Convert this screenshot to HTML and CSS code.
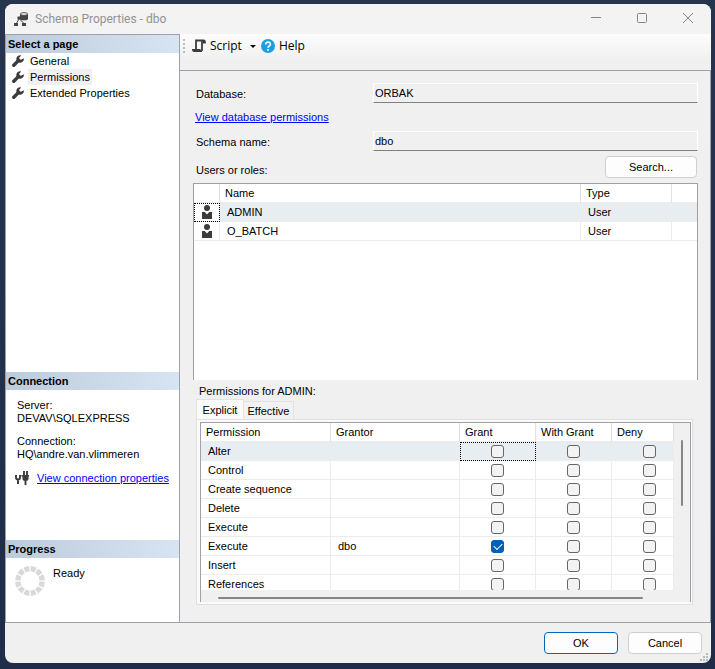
FILE: index.html
```html
<!DOCTYPE html>
<html lang="en">
<head>
<meta charset="utf-8">
<title>Schema Properties - dbo</title>
<link rel="stylesheet" href="styles.css">
</head>
<body>
<svg class="defs" aria-hidden="true">
  <symbol id="wrench" viewBox="0 0 12 12"><path d="M1.800 10.200 6.600 5.400" fill="none" stroke="#3c3c3c" stroke-width="3.400" stroke-linecap="round"/><path d="M9.200 .4A3.800 3.800 0 1 0 11.800 3.200L9 4.800 7.400 4.200 7.300 2.600Z" fill="#3c3c3c"/></symbol>
  <symbol id="user" viewBox="0 0 12 14"><circle cx="6" cy="3" r="3" fill="#3c3c3c"/><path d="M1 7h2.800L6 9.400 8.200 7H11v7H1Z" fill="#3c3c3c"/></symbol>
</svg>
<div class="window">
  <header class="titlebar">
    <svg class="app-icon" viewBox="0 0 14 15"><path d="M6 2v5c0 .8 1.500 1.300 4 1.300S14 7.800 14 7V2Z" fill="#444"/><ellipse cx="10" cy="2" rx="3.600" ry="1.400" fill="#f3f3f3" stroke="#444" stroke-width=".9"/><path d="M3.500 4.500h3v3h-3ZM0 11h4v3H0ZM8 11h4v3H8Z" fill="#444"/><path d="M5 7l-3 5M6 7.500l4 4" fill="none" stroke="#444"/></svg>
    <h1>Schema Properties - dbo</h1>
    <button class="caption" aria-label="Minimize"><svg viewBox="0 0 10 10"><path d="M0 4.500h10"/></svg></button>
    <button class="caption" aria-label="Maximize"><svg viewBox="0 0 10 10"><rect x=".5" y=".5" width="9" height="9" rx="1"/></svg></button>
    <button class="caption" aria-label="Close"><svg viewBox="0 0 10 10"><path d="M0 0l10 10M10 0 0 10"/></svg></button>
  </header>
  <div class="content">
    <aside class="sidebar">
      <nav class="pages">
        <h2>Select a page</h2>
        <a href="#general"><svg class="wrench"><use href="#wrench"/></svg><span>General</span></a>
        <a href="#permissions" class="current"><svg class="wrench"><use href="#wrench"/></svg><span>Permissions</span></a>
        <a href="#extended"><svg class="wrench"><use href="#wrench"/></svg><span>Extended Properties</span></a>
      </nav>
      <section class="connection">
        <h2>Connection</h2>
        <dl>
          <dt>Server:</dt><dd>DEVAV\SQLEXPRESS</dd>
          <dt>Connection:</dt><dd>HQ\andre.van.vlimmeren</dd>
        </dl>
        <p class="conn-link"><svg class="plug" viewBox="0 0 14 14"><path d="M1 4v2.500c0 1 .5 2 2 2s2-1 2-2V4M3 8v5M9 0v4M12 0v4M10.500 8v6" fill="none" stroke="#3c3c3c" stroke-width="1.900"/><path d="M6.500 4h8v1.500h-1V8c0 1-1 2-3 2s-3-1-3-2V5.500h-1Z" fill="#3c3c3c"/></svg><a class="link" href="#connection">View connection properties</a></p>
      </section>
      <section class="progress">
        <h2>Progress</h2>
        <p><svg class="spinner" viewBox="0 0 30 30"><circle cx="15" cy="15" r="12.200" fill="none" stroke="#d9d9d9" stroke-width="5.400" pathLength="120" stroke-dasharray="8 2" stroke-dashoffset="-1"/></svg><span>Ready</span></p>
      </section>
    </aside>
    <main>
      <div class="toolbar">
        <span class="grip"></span>
        <button class="tool"><svg class="script" viewBox="0 0 14 14"><path d="M4 11V1.500h7.500M10 12V3c0-1 .5-1.500 1.500-1.500S13 2 13 3.500h-2" fill="none" stroke="#3c3c3c" stroke-width="1.800"/><path d="M0 10h8.500c0 1 .5 2 1.500 2v1H2c-1.300 0-2-1-2-3Z" fill="#3c3c3c"/></svg>Script<i class="arrow"></i></button>
        <button class="tool"><svg class="help" viewBox="0 0 14 14"><circle cx="7" cy="7" r="7" fill="#1b9fe0"/><path d="M4.700 5.400C4.700 2.400 9.400 2.500 9.400 5.200 9.400 6.800 7 6.900 7 8.800" fill="none" stroke="#fff" stroke-width="1.700"/><path d="M6.100 10h1.800v1.800H6.100Z" fill="#fff"/></svg>Help</button>
      </div>
      <form class="page">
        <div class="field"><label for="db">Database:</label><input id="db" value="ORBAK" readonly></div>
        <p class="db-link"><a class="link" href="#database">View database permissions</a></p>
        <div class="field"><label for="schema">Schema name:</label><input id="schema" value="dbo" readonly></div>
        <div class="users-head"><span>Users or roles:</span><button type="button" class="btn search">Search...</button></div>
        <div class="users">
          <table>
            <colgroup><col class="c-icon"><col><col class="c-type"><col class="c-end"></colgroup>
            <thead><tr><th></th><th>Name</th><th>Type</th><th></th></tr></thead>
            <tbody>
              <tr class="selected"><td class="icon focus"><svg class="user"><use href="#user"/></svg></td><td>ADMIN</td><td>User</td><td></td></tr>
              <tr><td class="icon"><svg class="user"><use href="#user"/></svg></td><td>O_BATCH</td><td>User</td><td></td></tr>
            </tbody>
          </table>
        </div>
        <p class="perm-title">Permissions for ADMIN:</p>
        <div class="tabs" role="tablist"><button type="button" role="tab" class="tab active" aria-selected="true">Explicit</button><button type="button" role="tab" class="tab">Effective</button></div>
        <div class="tab-panel">
          <div class="grid">
            <div class="rows">
              <table>
                <colgroup><col class="c-perm"><col><col class="c-check"><col class="c-check"><col class="c-deny"></colgroup>
                <thead><tr><th>Permission</th><th>Grantor</th><th>Grant</th><th>With Grant</th><th>Deny</th></tr></thead>
                <tbody>
                  <tr class="selected"><td>Alter</td><td></td><td class="check focus"><input type="checkbox" aria-label="Grant Alter"></td><td class="check"><input type="checkbox" aria-label="With Grant Alter"></td><td class="check"><input type="checkbox" aria-label="Deny Alter"></td></tr>
                  <tr><td>Control</td><td></td><td class="check"><input type="checkbox" aria-label="Grant Control"></td><td class="check"><input type="checkbox" aria-label="With Grant Control"></td><td class="check"><input type="checkbox" aria-label="Deny Control"></td></tr>
                  <tr><td>Create sequence</td><td></td><td class="check"><input type="checkbox" aria-label="Grant Create sequence"></td><td class="check"><input type="checkbox" aria-label="With Grant Create sequence"></td><td class="check"><input type="checkbox" aria-label="Deny Create sequence"></td></tr>
                  <tr><td>Delete</td><td></td><td class="check"><input type="checkbox" aria-label="Grant Delete"></td><td class="check"><input type="checkbox" aria-label="With Grant Delete"></td><td class="check"><input type="checkbox" aria-label="Deny Delete"></td></tr>
                  <tr><td>Execute</td><td></td><td class="check"><input type="checkbox" aria-label="Grant Execute"></td><td class="check"><input type="checkbox" aria-label="With Grant Execute"></td><td class="check"><input type="checkbox" aria-label="Deny Execute"></td></tr>
                  <tr><td>Execute</td><td>dbo</td><td class="check"><input type="checkbox" checked aria-label="Grant Execute by dbo"></td><td class="check"><input type="checkbox" aria-label="With Grant Execute by dbo"></td><td class="check"><input type="checkbox" aria-label="Deny Execute by dbo"></td></tr>
                  <tr><td>Insert</td><td></td><td class="check"><input type="checkbox" aria-label="Grant Insert"></td><td class="check"><input type="checkbox" aria-label="With Grant Insert"></td><td class="check"><input type="checkbox" aria-label="Deny Insert"></td></tr>
                  <tr><td>References</td><td></td><td class="check"><input type="checkbox" aria-label="Grant References"></td><td class="check"><input type="checkbox" aria-label="With Grant References"></td><td class="check"><input type="checkbox" aria-label="Deny References"></td></tr>
                </tbody>
              </table>
            </div>
            <div class="vbar"><span></span></div>
            <div class="hbar"><span></span></div>
          </div>
        </div>
      </form>
    </main>
  </div>
  <footer>
    <button class="btn ok">OK</button>
    <button class="btn">Cancel</button>
    <svg class="resize" viewBox="0 0 8 8"><path d="M6 0h2v2H6ZM3 3h2v2H3ZM6 3h2v2H6ZM0 6h2v2H0ZM3 6h2v2H3ZM6 6h2v2H6Z" fill="#bcbcbc"/></svg>
  </footer>
</div>
</body>
</html>
```
FILE: styles.css
```css
* { box-sizing: border-box; }
body {
  margin: 0;
  height: 100vh;
  padding: 4px 4px 6px 5px;
  display: flex;
  background: linear-gradient(#26344f, #1f2d48);
  font: 11px/14px "Liberation Sans", Arial, sans-serif;
  color: #000;
}
h1, h2, p, dl, dd { margin: 0; }
button, input { font: inherit; color: inherit; }
.defs { position: absolute; width: 0; height: 0; }
.window {
  position: relative;
  flex: 1;
  min-width: 0;
  display: flex;
  flex-direction: column;
  border-radius: 8px;
  overflow: hidden;
  background: #f0f0f0;
}

.titlebar { flex: 0 0 30px; display: flex; align-items: center; padding-left: 9px; background: #f3f3f3; }
.app-icon { width: 14px; height: 15px; }
.titlebar h1 { flex: 1; margin-left: 7px; font: 12px/16px Roboto, sans-serif; color: #929292; }
.caption { width: 46px; height: 30px; padding: 0 0 2px; border: 0; background: none; display: grid; place-items: center; }
.caption svg { width: 10px; height: 10px; fill: none; stroke: #858585; overflow: visible; }

.content { flex: 1; min-height: 0; display: flex; border-bottom: 1px solid #a0a0a8; }
.sidebar {
  flex: 0 0 175px;
  display: flex;
  flex-direction: column;
  background: #fff;
  border: 1px solid #a0a0a8;
  border-width: 1px 1px 0 1px;
}
.sidebar h2 { height: 18px; padding-left: 2px; font-size: 11px; line-height: 18px; background: linear-gradient(90deg, #bccbdb, #d7e4f2); }
.pages { flex: 1; }
.pages a { display: flex; align-items: center; height: 16px; padding-left: 6px; gap: 4px; color: inherit; text-decoration: none; }
.pages span { padding: 1px 2px; }
.pages .current span { background: #f0f0f0; }
.wrench { width: 12px; height: 12px; }
.connection { flex: 0 0 168px; }
.connection dl { padding: 9px 11px 0; line-height: 13px; }
.connection dd { margin-bottom: 10px; }
.conn-link { display: flex; align-items: center; gap: 8px; padding-left: 9px; white-space: nowrap; }
.plug { width: 14px; height: 14px; }
.link { color: #00f; text-decoration: underline; }
.progress { flex: 0 0 82px; }
.progress p { display: flex; gap: 8px; padding: 8px 9px; }
.spinner { width: 30px; height: 30px; }

main { flex: 1; min-width: 0; display: flex; flex-direction: column; }
.toolbar {
  flex: 0 0 37px;
  display: flex;
  align-items: center;
  padding: 0 3px 12px;
  background: linear-gradient(#fdfdfd, #f0f0f0 26px);
  border-bottom: 1px solid #a0a0a8;
}
.grip { width: 2px; height: 14px; margin-right: 7px; background: repeating-linear-gradient(#bbb 0 2px, transparent 2px 4px); }
.tool { display: flex; align-items: center; gap: 4px; padding: 0; margin-right: 5px; border: 0; background: none; font: 12px/16px "Open Sans", sans-serif; }
.script, .help { width: 14px; height: 14px; }
.arrow { margin-left: 4px; border: 3px solid transparent; border-top-color: #000; border-bottom: 0; }

.page { flex: 1; min-height: 0; display: flex; flex-direction: column; padding: 12px 12px 17px 13px; border-right: 1px solid #a0a0a8; }
.field { display: flex; align-items: center; }
.field label { flex: 0 0 180px; padding: 2px 0 0 3px; }
.field input {
  flex: 1;
  min-width: 0;
  height: 20px;
  padding: 0 1px 1px;
  border: 1px solid #fff;
  border-bottom-color: #808080;
  border-radius: 0;
  background: #f0f0f0;
  outline: 0;
}
.db-link { padding: 7px 2px; }
.users-head { display: flex; justify-content: space-between; padding: 5px 1px 5px 3px; line-height: 28px; height: 32px; }
.btn {
  width: 74px;
  height: 22px;
  padding: 0;
  border: 1px solid #cfcfcf;
  border-radius: 4px;
  background: #fdfdfd;
  line-height: 18px;
}
.search { width: 92px; }
.users { flex: 1; min-height: 0; background: #fff; border: 1px solid #a0a0a0; border-bottom: 0; }

table { width: 100%; table-layout: fixed; border-collapse: separate; border-spacing: 0; }
th, td { height: 19px; padding: 0 5px; border: 1px solid #ececec; border-width: 0 1px 1px 0; text-align: left; font-weight: normal; line-height: 18px; white-space: nowrap; }
td { padding-left: 7px; }
th { border-right-color: #e0e0e0; }
.selected td { background: #e8edf2; }
.c-icon { width: 26px; }
.c-end { width: 25px; }
.c-type { width: 91px; }
.users td:last-child, .users th:last-child { border-right: 0; }
.users td.icon { padding: 0; text-align: center; background: #fff; }
.user { width: 12px; height: 14px; display: block; margin: 2px auto; }
td.focus { outline: 1px dotted #000; outline-offset: -1px; }

.perm-title { padding: 4px 6px 1px; }
.tabs { display: flex; align-items: flex-end; padding-left: 3px; height: 20px; }
.tab { height: 18px; width: 50px; padding: 0; border: 1px solid #e2e2e2; border-width: 1px 1px 0 0; background: #f2f2f2; }
.tab.active { height: 20px; width: 48px; border-left-width: 1px; background: #fafafa; }
.tab-panel { margin: 0 5px 0 3px; padding: 2px 1px 2px 3px; background: #fafafa; border: 1px solid #e0e0e0; }
.grid {
  display: grid;
  grid-template-columns: minmax(0, 1fr) 16px;
  grid-template-rows: 167px 12px;
  border: 1px solid #a0a0a8;
  border-bottom: 0;
  background: #f0f0f0;
}
.rows { overflow: hidden; background: #fff; }
.c-perm { width: 130px; }
.c-check { width: 76px; }
.c-deny { width: 62px; }
td.check { padding: 0 0 0 31px; }
.check input {
  appearance: none;
  display: block;
  width: 13px;
  height: 13px;
  margin: 0;
  border: 1px solid #666;
  border-radius: 3px;
  background: #f3f3f3;
}
.check input:checked { border-color: #005fb8; background: #005fb8; display: grid; place-items: center; }
.check input:checked::before { content: ""; width: 7px; height: 4px; margin-bottom: 2px; border: solid #fff; border-width: 0 0 1px 1px; transform: rotate(-45deg); }
.vbar { padding: 17px 7px 0; }
.vbar span { display: block; height: 66px; background: #868686; border-radius: 1px; }
.hbar { padding: 7px 31px 0 17px; }
.hbar span { display: block; height: 2px; background: #868686; border-radius: 1px; }

footer { flex: 0 0 40px; display: flex; justify-content: flex-end; gap: 10px; padding: 9px 9px 0; }
.btn.ok { border-color: #0067c0; }
.resize { position: absolute; right: 3px; bottom: 2px; width: 8px; height: 8px; }
```
